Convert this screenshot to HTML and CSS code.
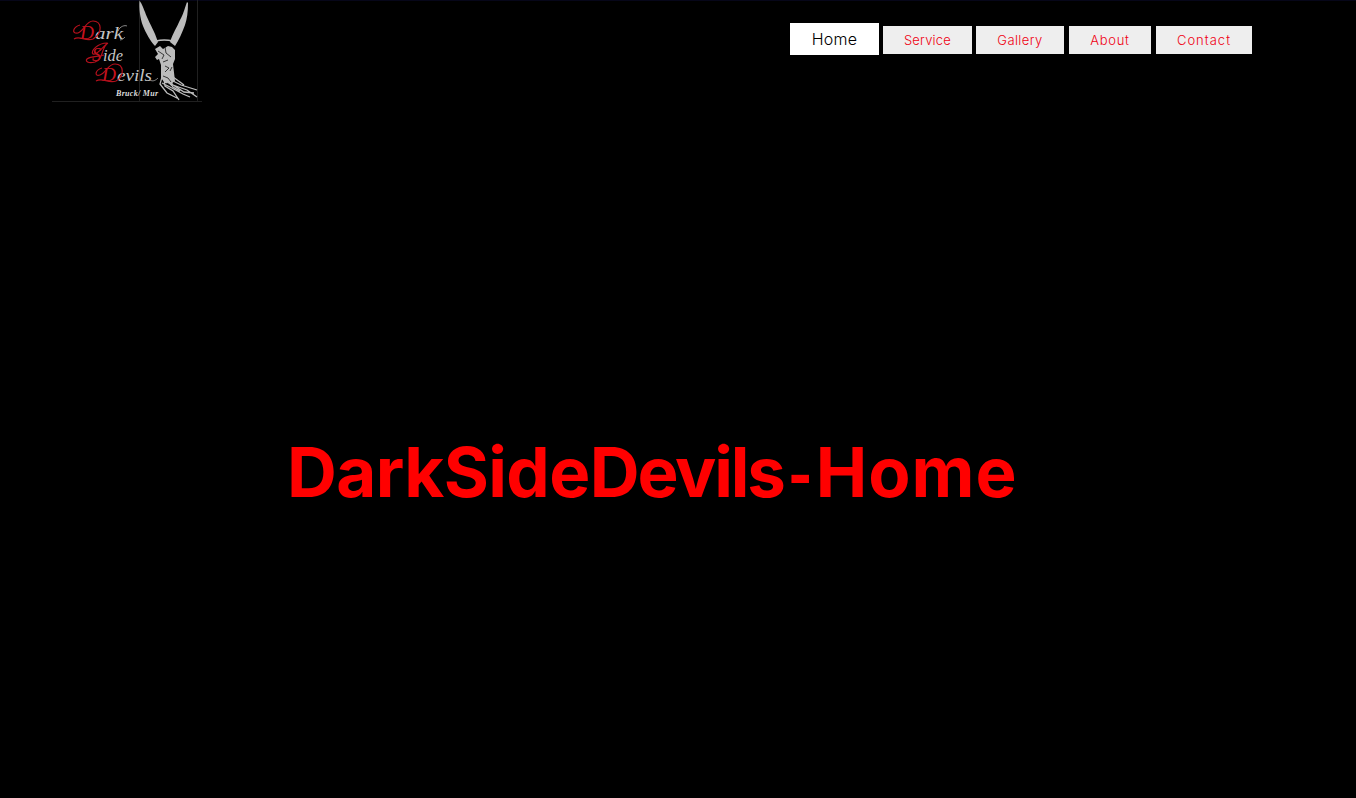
FILE: index.html
```
<!DOCTYPE html>
<html lang="en">
<head>
<meta charset="utf-8">
<title>DarkSideDevils-Home</title>
<link rel="stylesheet" href="styles.css">
</head>
<body>
<header class="header">
  <a class="logo" href="#">
    <svg width="150" height="103" viewBox="52 0 150 103" role="img" aria-label="Dark Side Devils Bruck/Mur">
      <path class="frame" d="M52 101.5H202M197.500 0V101M139.500 0V101"/>
      <g class="script">
        <text x="80" y="39" class="initial" textLength="14" lengthAdjust="spacingAndGlyphs">D</text>
        <text x="95" y="39" textLength="28" lengthAdjust="spacingAndGlyphs">ark</text>
        <text x="92" y="61" class="initial" textLength="9" lengthAdjust="spacingAndGlyphs">S</text>
        <text x="103" y="61" textLength="20" lengthAdjust="spacingAndGlyphs">ide</text>
        <text x="102" y="81" class="initial" textLength="14" lengthAdjust="spacingAndGlyphs">D</text>
        <text x="117" y="81" textLength="35" lengthAdjust="spacingAndGlyphs">evils</text>
      </g>
      <path class="swash" d="M80 25C73 27 71 34 78 33C84 31 86 21 93 21C102 21 103 33 93 39M74 39C80 35 85 42 93 39M107 43C98 43 90 51 93 54C97 56 103 46 108 43C101 47 104 59 95 62C88 64 85 61 87 59C91 56 99 57 104 55M102 68C95 70 94 77 100 75C106 73 108 64 115 64C124 64 125 76 116 81M96 81C103 77 108 84 116 81"/>
      <path class="tail" d="M118 31C120 26 125 25 127 26M120 40C122 40 124 38 125 37M150 80C153 82 156 80 158 78"/>
      <text x="116" y="96" class="town" textLength="42">Bruck/ Mur</text>
      <path class="bone" d="M139.500 1C141 2 143 7 145 12C147 18 152 27 155 34L158 42L155 46C150 41 146 33 143 26C140 18 139 8 139.500 1ZM187 2L188 3C188 12 187 19 185 25C182 33 179 40 175 46L170 42C173 33 177 27 180 20C184 13 185 7 187 2Z"/>
      <path class="line" d="M156 41Q164 39 173 41"/>
      <path class="bone" d="M155 49L160 46L163 49L168 46L172 47L175 50L175 59L173 64L175 81L171 84L165 83L161 78L161 65L159 59L157 60L155 57L158 54Z"/>
      <path class="line" d="M162 77L160 84L167 93L179 99M164 79L165 86L173 91L179 100M168 79L173 85L187 90L197 97M171 80L181 85L197 90M173 77L180 82L184 85M162 83L170 87L183 94L190 97M170 83L184 92L194 93M164 78L173 87L180 91"/>
      <path class="crack" d="M158 51L164 55L162 59M165 47L166 53L171 57M163 62L168 60M165 66L169 68L165 72M172 67L170 71M163 76L168 78L171 82M167 83L172 87"/>
    </svg>
  </a>
  <nav class="nav">
    <a class="item active" href="#">Home</a>
    <a class="item service" href="#">Service</a>
    <a class="item gallery" href="#">Gallery</a>
    <a class="item about" href="#">About</a>
    <a class="item contact" href="#">Contact</a>
  </nav>
</header>
<main class="hero">
  <h1 class="title"><span class="darkside">DarkSide</span><span class="devils">Devils</span><span class="dash">-</span><span class="home">Home</span></h1>
</main>
</body>
</html>
```
FILE: styles.css
```
* { box-sizing: border-box; }
body {
  margin: 0;
  height: 798px;
  overflow: hidden;
  background: #000;
  font-family: Inter, "Liberation Sans", sans-serif;
}
.header {
  display: flex;
  justify-content: space-between;
  align-items: flex-start;
  height: 103px;
  padding: 0 104px 0 52px;
  border-top: 1px solid #060619;
}
.logo { margin-top: -1px; }
.logo svg { display: block; }
.frame { fill: none; stroke: #202020; }
.script {
  font: italic 17px "Liberation Serif", serif;
  fill: #c5c5c5;
}
.initial { fill: #c5121f; font-size: 19px; }
.swash { fill: none; stroke: #b5101c; stroke-width: 1.200; }
.tail { fill: none; stroke: #aaa; stroke-width: .8; }
.town { font: italic bold 8px "Liberation Serif", serif; fill: #ddd; }
.bone { fill: #bcbcbc; }
.line { fill: none; stroke: #bcbcbc; stroke-width: 1.300; }
.crack { fill: none; stroke: #151515; stroke-width: .8; }
.nav {
  display: flex;
  align-items: flex-start;
  margin-top: 22px;
}
.item {
  display: flex;
  align-items: center;
  justify-content: center;
  width: 89px;
  height: 28px;
  margin: 3px 0 0 4px;
  background: #eee;
  color: #f00012;
  font-size: 13px;
  font-weight: 300;
  letter-spacing: .2px;
  text-decoration: none;
}
.active {
  height: 32px;
  margin: 0;
  background: #fff;
  color: #000;
  font-size: 16px;
}
.gallery { width: 88px; letter-spacing: .4px; }
.about { width: 82px; margin-left: 5px; letter-spacing: .7px; }
.contact { width: 96px; margin-left: 5px; letter-spacing: 1px; }
.hero { padding: 327px 0 0 287px; }
.title {
  margin: 0;
  color: #f00;
  font-size: 69px;
  font-weight: 700;
  line-height: 84px;
  white-space: nowrap;
}
.darkside { letter-spacing: -.6px; }
.devils { letter-spacing: -2.200px; }
.dash { font-family: "Liberation Sans", sans-serif; margin: 0 4px 0 5px; }
.home { letter-spacing: 1px; }
```
